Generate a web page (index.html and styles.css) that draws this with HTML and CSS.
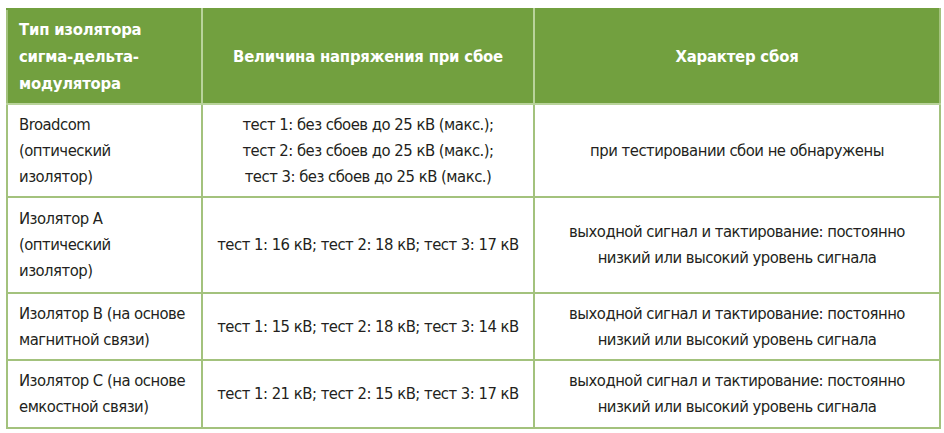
FILE: index.html
```html
<!DOCTYPE html>
<html lang="ru">
<head>
<meta charset="utf-8">
<link rel="stylesheet" href="styles.css">
</head>
<body>
<table class="grid">
  <colgroup>
    <col class="c1">
    <col class="c2">
    <col class="c3">
  </colgroup>
  <thead>
    <tr class="head">
      <th class="left">Тип изолятора<br>сигма-дельта-<br>модулятора</th>
      <th>Величина напряжения при сбое</th>
      <th>Характер сбоя</th>
    </tr>
  </thead>
  <tbody>
    <tr class="r1">
      <td class="left">Broadcom<br>(оптический<br>изолятор)</td>
      <td>тест 1: без сбоев до 25 кВ (макс.);<br>тест 2: без сбоев до 25 кВ (макс.);<br>тест 3: без сбоев до 25 кВ (макс.)</td>
      <td>при тестировании сбои не обнаружены</td>
    </tr>
    <tr class="r2">
      <td class="left">Изолятор А<br>(оптический<br>изолятор)</td>
      <td>тест 1: 16 кВ; тест 2: 18 кВ; тест 3: 17 кВ</td>
      <td>выходной сигнал и тактирование: постоянно<br>низкий или высокий уровень сигнала</td>
    </tr>
    <tr class="r3">
      <td class="left">Изолятор В (на основе<br>магнитной связи)</td>
      <td>тест 1: 15 кВ; тест 2: 18 кВ; тест 3: 14 кВ</td>
      <td>выходной сигнал и тактирование: постоянно<br>низкий или высокий уровень сигнала</td>
    </tr>
    <tr class="r4">
      <td class="left">Изолятор С (на основе<br>емкостной связи)</td>
      <td>тест 1: 21 кВ; тест 2: 15 кВ; тест 3: 17 кВ</td>
      <td>выходной сигнал и тактирование: постоянно<br>низкий или высокий уровень сигнала</td>
    </tr>
  </tbody>
</table>
</body>
</html>
```
FILE: styles.css
```css
html, body {
  margin: 0;
  background: #ffffff;
}
body {
  padding: 8px 5px 6px 6px;
  font-family: "DejaVu Sans Condensed", "Liberation Sans", sans-serif;
  color: #231f20;
}
.grid {
  border-collapse: collapse;
  width: 933px;
  table-layout: fixed;
  font-size: 16.5px;
  line-height: 26px;
  letter-spacing: -0.5px;
}
.c1 { width: 195px; }
.c2 { width: 332px; }
.c3 { width: 406px; }
.grid th,
.grid td {
  border: 2px solid #a3c27d;
  text-align: center;
  vertical-align: middle;
  padding: 0 4px;
  white-space: nowrap;
}
.grid th {
  background: #72a03f;
  color: #ffffff;
  font-weight: bold;
  line-height: 27px;
  letter-spacing: -0.2px;
  border-color: #b9d39b;
  border-top-color: #72a03f;
}
.grid th:first-child { border-left-color: #a3c27d; }
.grid th:last-child { border-right-color: #a3c27d; }
.grid .left {
  text-align: left;
  padding-left: 11px;
}
.head { height: 95px; }
.r1 { height: 93px; }
.r2 { height: 96px; }
.r3 { height: 67px; }
.r4 { height: 68px; }
```
